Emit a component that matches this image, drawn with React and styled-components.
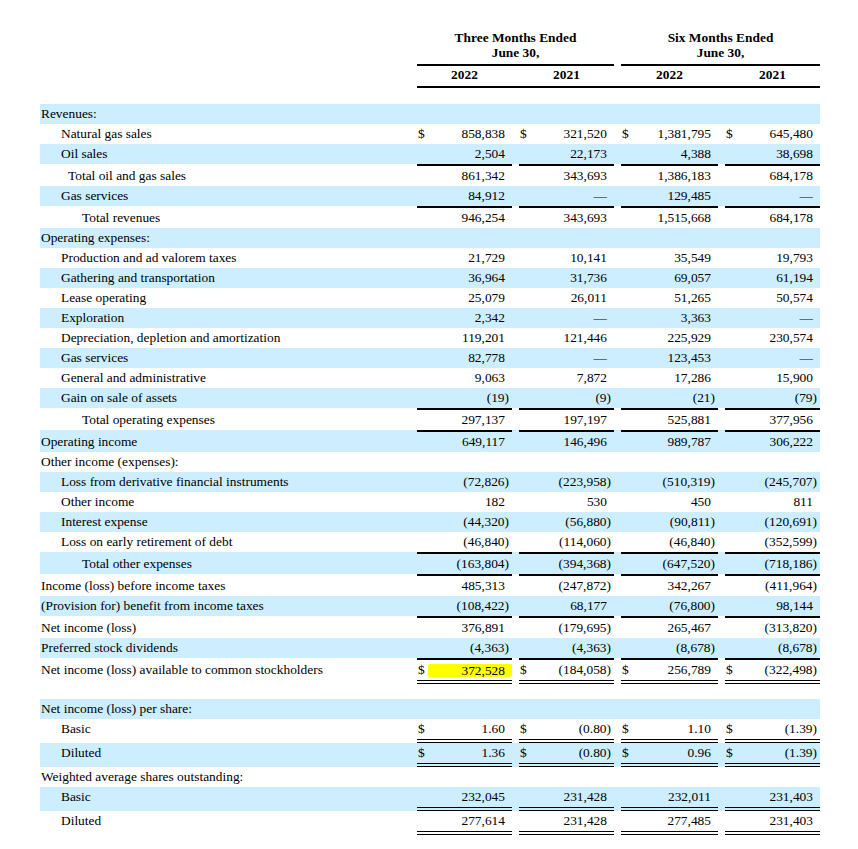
import React from 'react';
import styled, { createGlobalStyle } from 'styled-components';

const GlobalStyle = createGlobalStyle`
  html, body {
    margin: 0;
    padding: 0;
    background: #fff;
  }
  body {
    font-family: "Liberation Serif", "Times New Roman", serif;
    color: #000;
  }
`;

// label column + four figure columns, same track sizes for head and body
const COLS = '370px 95px 95px 97px 95px';

const Page = styled.div`
  width: 780px;
  padding: 30px 0 20px 40px;
  font-size: 13.4px;
`;

const Head = styled.div`
  display: grid;
  grid-template-columns: ${COLS};
  column-gap: 7px;
  font-weight: bold;
  line-height: 15px;
  text-align: center;
`;

const Period = styled.div`
  grid-column: span 2;
  padding-bottom: 4px;
  border-bottom: 2px solid #000;
`;

const YearBand = styled.div`
  grid-column: 2 / -1;
  display: grid;
  grid-template-columns: 95px 95px 97px 95px;
  column-gap: 7px;
  padding: 1px 0 4px;
  border-bottom: 2px solid #000;
`;

const Body = styled.div`
  margin-top: 16px;
`;

const Row = styled.div`
  display: grid;
  grid-template-columns: ${COLS};
  column-gap: 7px;
  background: ${p => (p.$shade ? '#cceeff' : 'transparent')};
`;

const Label = styled.div`
  line-height: 20px;
  padding-left: ${p => [1, 21, 28, 42][p.$indent]}px;
  padding-top: ${p => (p.$top ? 2 : 0)}px;
  padding-bottom: ${p => (p.$double ? 4 : 0)}px;
  white-space: nowrap;
`;

const Cell = styled.div`
  display: flex;
  align-items: center;
  line-height: 20px;
  padding: 0 7px 0 1px;
  border-top: ${p => (p.$top ? '2px solid #000' : 'none')};
  border-bottom: ${p => (p.$double ? '4px double #000' : 'none')};
`;

const Dollar = styled.span`
  flex: none;
`;

const Value = styled.span`
  flex: 1;
  text-align: right;
  white-space: nowrap;
  ${p =>
    p.$mark &&
    `
    margin: 0 -7px 0 3px;
    padding-right: 7px;
    line-height: 13px;
    background: #ffff00;
    border-radius: 2px 1px 3px 1px;
  `}
`;

const Paren = styled.span`
  margin-right: -4px;
`;

const Spacer = styled.div`
  height: 15px;
`;

const rows = [
  { label: 'Revenues:', indent: 0 },
  { label: 'Natural gas sales', indent: 1, dollar: true, v: ['858,838', '321,520', '1,381,795', '645,480'] },
  { label: 'Oil sales', indent: 1, v: ['2,504', '22,173', '4,388', '38,698'] },
  { label: 'Total oil and gas sales', indent: 2, top: true, v: ['861,342', '343,693', '1,386,183', '684,178'] },
  { label: 'Gas services', indent: 1, v: ['84,912', '—', '129,485', '—'] },
  { label: 'Total revenues', indent: 3, top: true, v: ['946,254', '343,693', '1,515,668', '684,178'] },
  { label: 'Operating expenses:', indent: 0 },
  { label: 'Production and ad valorem taxes', indent: 1, v: ['21,729', '10,141', '35,549', '19,793'] },
  { label: 'Gathering and transportation', indent: 1, v: ['36,964', '31,736', '69,057', '61,194'] },
  { label: 'Lease operating', indent: 1, v: ['25,079', '26,011', '51,265', '50,574'] },
  { label: 'Exploration', indent: 1, v: ['2,342', '—', '3,363', '—'] },
  { label: 'Depreciation, depletion and amortization', indent: 1, v: ['119,201', '121,446', '225,929', '230,574'] },
  { label: 'Gas services', indent: 1, v: ['82,778', '—', '123,453', '—'] },
  { label: 'General and administrative', indent: 1, v: ['9,063', '7,872', '17,286', '15,900'] },
  { label: 'Gain on sale of assets', indent: 1, v: ['(19)', '(9)', '(21)', '(79)'] },
  { label: 'Total operating expenses', indent: 3, top: true, v: ['297,137', '197,197', '525,881', '377,956'] },
  { label: 'Operating income', indent: 0, top: true, v: ['649,117', '146,496', '989,787', '306,222'] },
  { label: 'Other income (expenses):', indent: 0 },
  { label: 'Loss from derivative financial instruments', indent: 1, v: ['(72,826)', '(223,958)', '(510,319)', '(245,707)'] },
  { label: 'Other income', indent: 1, v: ['182', '530', '450', '811'] },
  { label: 'Interest expense', indent: 1, v: ['(44,320)', '(56,880)', '(90,811)', '(120,691)'] },
  { label: 'Loss on early retirement of debt', indent: 1, v: ['(46,840)', '(114,060)', '(46,840)', '(352,599)'] },
  { label: 'Total other expenses', indent: 3, top: true, v: ['(163,804)', '(394,368)', '(647,520)', '(718,186)'] },
  { label: 'Income (loss) before income taxes', indent: 0, top: true, v: ['485,313', '(247,872)', '342,267', '(411,964)'] },
  { label: '(Provision for) benefit from income taxes', indent: 0, v: ['(108,422)', '68,177', '(76,800)', '98,144'] },
  { label: 'Net income (loss)', indent: 0, top: true, v: ['376,891', '(179,695)', '265,467', '(313,820)'] },
  { label: 'Preferred stock dividends', indent: 0, v: ['(4,363)', '(4,363)', '(8,678)', '(8,678)'] },
  {
    label: 'Net income (loss) available to common stockholders',
    indent: 0,
    top: true,
    double: true,
    dollar: true,
    mark: 0,
    v: ['372,528', '(184,058)', '256,789', '(322,498)'],
    gapAfter: true,
  },
  { label: 'Net income (loss) per share:', indent: 0 },
  { label: 'Basic', indent: 1, double: true, dollar: true, v: ['1.60', '(0.80)', '1.10', '(1.39)'] },
  { label: 'Diluted', indent: 1, double: true, dollar: true, v: ['1.36', '(0.80)', '0.96', '(1.39)'] },
  { label: 'Weighted average shares outstanding:', indent: 0 },
  { label: 'Basic', indent: 1, double: true, v: ['232,045', '231,428', '232,011', '231,403'] },
  { label: 'Diluted', indent: 1, double: true, v: ['277,614', '231,428', '277,485', '231,403'] },
];

// negative figures keep the digits aligned, the closing paren hangs into the padding
const Figure = ({ text, mark }) => {
  const neg = text.endsWith(')');
  return (
    <Value $mark={mark}>
      {neg ? text.slice(0, -1) : text}
      {neg && <Paren>)</Paren>}
    </Value>
  );
};

const LineItem = ({ row, shade }) => (
  <Row $shade={shade}>
    <Label $indent={row.indent} $top={row.top} $double={row.double}>
      {row.label}
    </Label>
    {row.v &&
      row.v.map((val, i) => (
        <Cell key={i} $top={row.top} $double={row.double}>
          {row.dollar && <Dollar>$</Dollar>}
          <Figure text={val} mark={row.mark === i} />
        </Cell>
      ))}
  </Row>
);

export default function App() {
  return (
    <>
      <GlobalStyle />
      <Page>
        <Head>
          <div />
          <Period>
            Three Months Ended
            <br />
            June 30,
          </Period>
          <Period>
            Six Months Ended
            <br />
            June 30,
          </Period>
          <div />
          <YearBand>
            <div>2022</div>
            <div>2021</div>
            <div>2022</div>
            <div>2021</div>
          </YearBand>
        </Head>
        <Body>
          {rows.map((row, i) => (
            <React.Fragment key={i}>
              <LineItem row={row} shade={i % 2 === 0} />
              {row.gapAfter && <Spacer />}
            </React.Fragment>
          ))}
        </Body>
      </Page>
    </>
  );
}
